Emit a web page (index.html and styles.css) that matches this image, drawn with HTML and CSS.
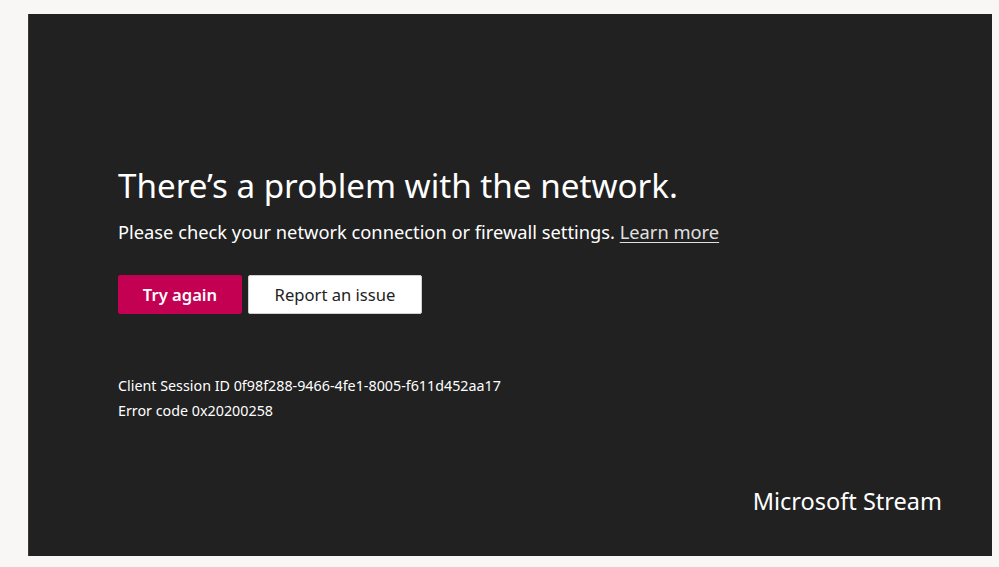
FILE: index.html
```html
<!DOCTYPE html>
<html lang="en">
<head>
<meta charset="utf-8">
<title>Microsoft Stream</title>
<link rel="stylesheet" href="styles.css">
</head>
<body>
<main class="panel">
  <section class="error">
    <h1 class="title">There’s a problem with the network.</h1>
    <p class="subtitle">Please check your network connection or firewall settings. <a class="learn" href="#">Learn more</a></p>
    <div class="actions">
      <button class="btn btn-primary" type="button">Try again</button>
      <button class="btn btn-secondary" type="button">Report an issue</button>
    </div>
    <div class="details">
      <p class="detail">Client Session ID 0f98f288-9466-4fe1-8005-f611d452aa17</p>
      <p class="detail">Error code 0x20200258</p>
    </div>
  </section>
  <footer class="brand">Microsoft Stream</footer>
</main>
</body>
</html>
```

FILE: styles.css
```css
html, body {
  margin: 0;
  padding: 0;
}
body {
  background: #f8f7f5;
  font-family: "Noto Sans", "Open Sans", sans-serif;
  width: 999px;
  height: 567px;
  overflow: hidden;
}
.panel {
  box-sizing: border-box;
  margin: 14px 0 0 28px;
  width: 964px;
  height: 542px;
  background: #212121;
  border-left: 1px solid #3a3a3a;
  display: flex;
  flex-direction: column;
  padding: 150px 50px 40px 89px;
  color: #ffffff;
}
.error {
  display: flex;
  flex-direction: column;
  align-items: flex-start;
}
.title {
  margin: 0;
  font-weight: 400;
  font-size: 33.2px;
  line-height: 44px;
  color: #ffffff;
}
.subtitle {
  margin: 10px 0 0;
  font-size: 18.3px;
  line-height: 28px;
  color: #ffffff;
}
.learn {
  color: #e0e0e0;
  text-decoration: underline;
  text-underline-offset: 3px;
}
.actions {
  display: flex;
  gap: 6px;
  margin-top: 29px;
}
.btn {
  box-sizing: border-box;
  height: 39px;
  font-family: inherit;
  font-size: 16.6px;
  border-radius: 2px;
  padding: 0;
  cursor: pointer;
}
.btn-primary {
  width: 124px;
  background: #c30052;
  border: 1px solid #c30052;
  color: #ffffff;
  font-weight: 600;
}
.btn-secondary {
  width: 174px;
  background: #ffffff;
  border: 1px solid #d0d0d0;
  color: #222222;
}
.details {
  margin-top: 59px;
}
.detail {
  margin: 0;
  font-size: 14.3px;
  line-height: 25px;
  color: #ffffff;
}
.brand {
  margin-top: auto;
  align-self: flex-end;
  font-size: 23.5px;
  line-height: 30px;
  color: #ffffff;
}
```
